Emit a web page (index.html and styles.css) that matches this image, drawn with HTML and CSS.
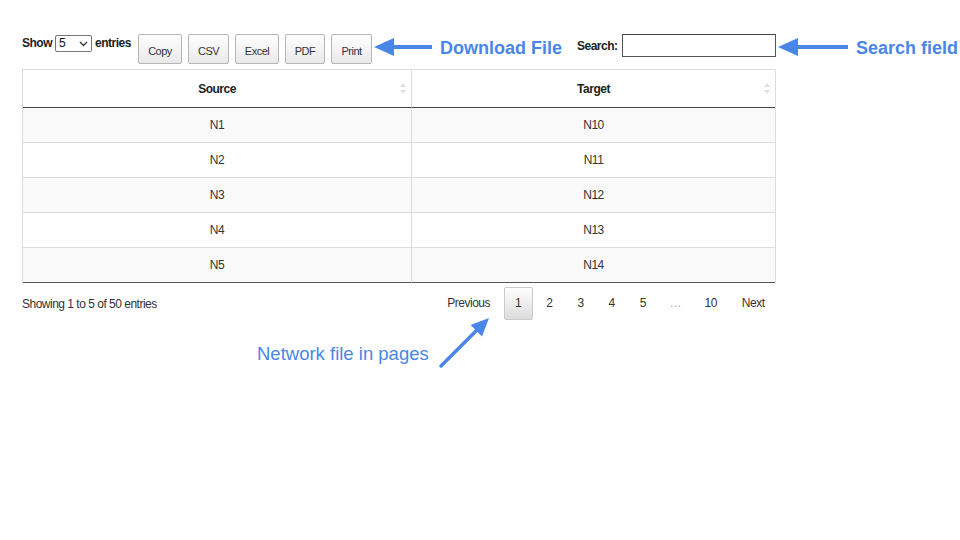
FILE: index.html
```html
<!DOCTYPE html>
<html>
<head>
<meta charset="utf-8">
<link rel="stylesheet" href="styles.css">
</head>
<body>
<div class="wrap">
  <div class="toolbar">
    <div class="length">
      <span>Show</span>
      <span class="select"><span class="sel-val">5</span><svg class="chev" width="9" height="6" viewBox="0 0 9 6"><path d="M1 1 L4.5 4.5 L8 1" fill="none" stroke="#333" stroke-width="1.3"/></svg></span>
      <span>entries</span>
    </div>
    <div class="buttons">
      <button class="btn b-copy">Copy</button>
      <button class="btn b-csv">CSV</button>
      <button class="btn b-excel">Excel</button>
      <button class="btn b-pdf">PDF</button>
      <button class="btn b-print">Print</button>
    </div>
    <svg class="arrow a1" width="58" height="20" viewBox="0 0 58 20"><polygon points="0,10 20,1 20,19" fill="#4a86e8"/><rect x="18" y="8" width="40" height="4" fill="#4a86e8"/></svg>
    <div class="note-label dl">Download File</div>
    <div class="search">
      <label class="search-label">Search:</label>
      <input class="search-input" type="text">
    </div>
    <svg class="arrow a2" width="70" height="20" viewBox="0 0 70 20"><polygon points="0,10 20,1 20,19" fill="#4a86e8"/><rect x="18" y="8" width="52" height="4" fill="#4a86e8"/></svg>
    <div class="note-label sf">Search field</div>
  </div>

  <table class="dt">
    <thead>
      <tr>
        <th>Source<span class="sort"><svg width="6" height="11" viewBox="0 0 6 11"><polygon points="3,0 6,4 0,4" fill="#e0e0e0"/><polygon points="3,11 6,7 0,7" fill="#e0e0e0"/></svg></span></th>
        <th class="c2">Target<span class="sort"><svg width="6" height="11" viewBox="0 0 6 11"><polygon points="3,0 6,4 0,4" fill="#e0e0e0"/><polygon points="3,11 6,7 0,7" fill="#e0e0e0"/></svg></span></th>
      </tr>
    </thead>
    <tbody>
      <tr class="odd"><td>N1</td><td class="c2">N10</td></tr>
      <tr><td>N2</td><td class="c2">N11</td></tr>
      <tr class="odd"><td>N3</td><td class="c2">N12</td></tr>
      <tr><td>N4</td><td class="c2">N13</td></tr>
      <tr class="odd"><td>N5</td><td class="c2">N14</td></tr>
    </tbody>
  </table>

  <div class="footer">
    <div class="info">Showing 1 to 5 of 50 entries</div>
    <div class="paginate">
      <span class="pg">Previous</span>
      <span class="pg current">1</span>
      <span class="pg">2</span>
      <span class="pg">3</span>
      <span class="pg">4</span>
      <span class="pg">5</span>
      <span class="pg ellipsis">…</span>
      <span class="pg">10</span>
      <span class="pg">Next</span>
    </div>
  </div>

  <div class="note-row">
    <span class="note-text">Network file in pages</span>
    <svg class="diag" width="56" height="56" viewBox="0 0 56 56"><line x1="3" y1="51" x2="40" y2="14" stroke="#4a86e8" stroke-width="3.5" stroke-linecap="round"/><polygon points="51,3 32.6,10 44,21.4" fill="#4a86e8"/></svg>
  </div>
</div>
</body>
</html>
```

FILE: styles.css
```css
* { box-sizing: border-box; }

html, body {
  margin: 0;
  padding: 0;
  background: #ffffff;
}

body {
  width: 960px;
  height: 540px;
  overflow: hidden;
  font-family: "Liberation Sans", Arial, sans-serif;
  color: #333;
}

.wrap {
  padding: 34px 0 0 22px;
}

.length,
.btn,
.search-label,
.dt,
.footer {
  letter-spacing: -0.5px;
}

.toolbar {
  display: flex;
  align-items: flex-start;
  height: 30px;
  white-space: nowrap;
}

.length {
  width: 116px;
  margin-top: 1px;
  display: flex;
  align-items: center;
  gap: 3px;
  font-size: 12px;
  font-weight: bold;
  color: #222;
  line-height: 17px;
}

.select {
  display: inline-flex;
  align-items: center;
  justify-content: space-between;
  width: 37px;
  height: 17px;
  border: 1px solid #767676;
  border-radius: 2px;
  padding: 0 3px 0 3px;
  font-weight: normal;
  font-size: 12px;
  color: #111;
  background: #fff;
}

.buttons {
  display: flex;
  gap: 6px;
}

.btn {
  height: 30px;
  padding: 0;
  margin: 0;
  border: 1px solid #b5b5b5;
  border-radius: 2px;
  background: linear-gradient(to bottom, #ffffff 0%, #e9e9e9 100%);
  font-family: inherit;
  font-size: 11px;
  color: #333;
  padding-top: 3px;
}
.b-copy { width: 44px; }
.b-csv { width: 41px; }
.b-excel { width: 44px; }
.b-pdf { width: 40px; }
.b-print { width: 41px; }

.arrow { display: block; margin-top: 3px; flex: none; }
.a1 { margin-left: 2px; }

.note-label {
  font-weight: bold;
  font-size: 18px;
  line-height: 22px;
  color: #4a86e8;
  margin-top: 3px;
}
.dl { width: 137px; margin-left: 8px; }
.sf { margin-left: 8px; }

.search {
  display: flex;
  align-items: center;
  height: 23px;
}
.search-label {
  width: 45px;
  font-size: 12px;
  font-weight: bold;
  color: #222;
}
.search-input {
  width: 154px;
  height: 23px;
  margin: 0;
  border: 1px solid #555;
  border-top-color: #444;
  border-radius: 0;
  padding: 0 4px;
  background: #fff;
}
.a2 { margin-left: 2px; }

.dt {
  margin-top: 5px;
  width: 754px;
  border-collapse: separate;
  border-spacing: 0;
  border: 1px solid #dcdcdc;
  border-bottom: none;
  table-layout: fixed;
  font-size: 12px;
}
.dt th {
  position: relative;
  height: 38px;
  padding: 0;
  font-weight: bold;
  color: #222;
  border-bottom: 1px solid #444;
  text-align: center;
  width: 50%;
}
.dt th:first-child { width: 388px; }
.dt .c2 { border-left: 1px solid #dcdcdc; }
.sort {
  position: absolute;
  right: 5px;
  top: 13px;
  line-height: 0;
}
.dt td {
  height: 35px;
  padding: 0;
  text-align: center;
  color: #333;
  border-top: 1px solid #dcdcdc;
}
.dt tbody tr:first-child td { border-top: none; height: 34px; }
.dt tbody tr:last-child td { border-bottom: 1px solid #555; height: 36px; }
.dt tr.odd td { background: #f9f9f9; }

.footer {
  width: 754px;
  margin-top: 3px;
  height: 34px;
  display: flex;
  align-items: center;
  justify-content: space-between;
  font-size: 12px;
}
.info { color: #333; margin-top: 2px; }
.paginate {
  display: flex;
  align-items: center;
}
.pg {
  display: flex;
  align-items: center;
  height: 33px;
  padding: 0 10.5px;
  margin-left: 2px;
  border: 1px solid transparent;
  border-radius: 2px;
  color: #333;
}
.pg.current {
  border-color: #cacaca;
  background: linear-gradient(to bottom, #ffffff 0%, #dcdcdc 100%);
}
.pg.ellipsis { color: #aaa; padding: 0 9px; }

.note-row {
  position: relative;
  margin-top: 24px;
  padding-left: 235px;
  height: 20px;
}
.note-text {
  font-size: 18.5px;
  line-height: 20px;
  color: #4a86e8;
}
.diag {
  position: absolute;
  left: 416px;
  top: -29px;
}
```
